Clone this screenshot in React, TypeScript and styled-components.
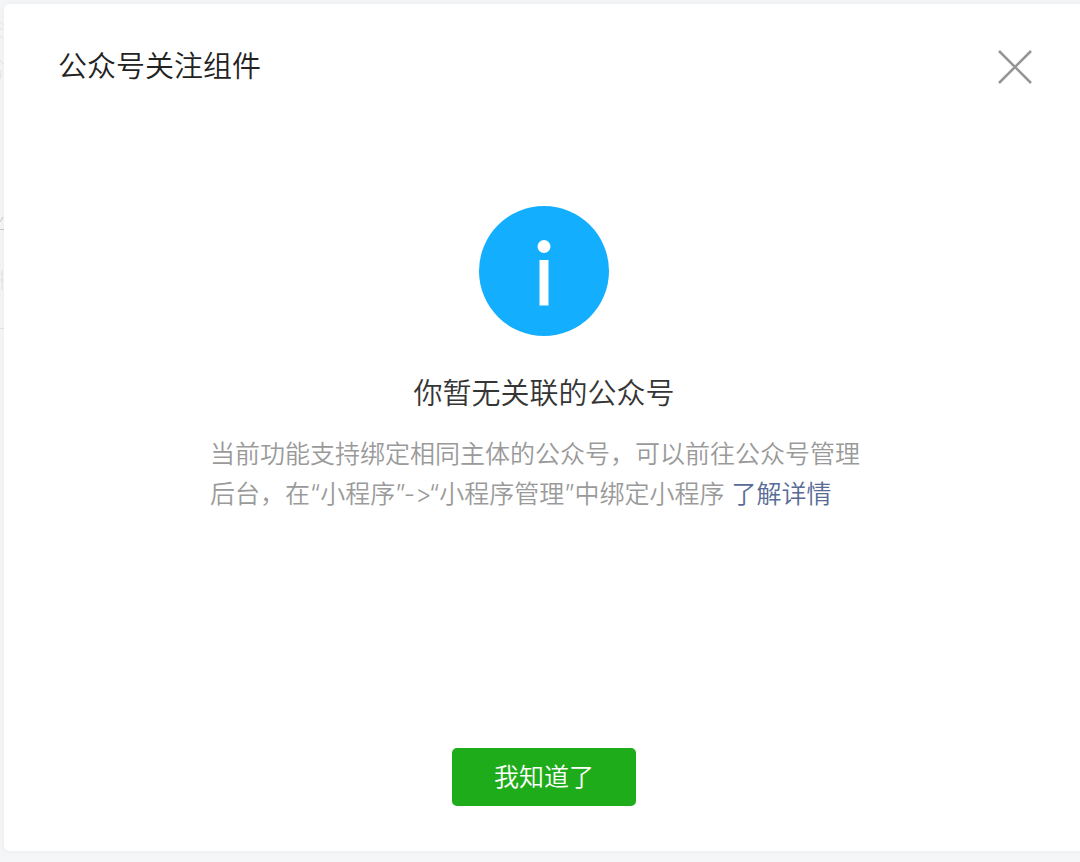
import React from "react";
import styled, { createGlobalStyle } from "styled-components";

const GlobalStyle = createGlobalStyle`
  * { box-sizing: border-box; }
  body {
    margin: 0;
    background: #f5f6f8;
    font-family: Inter, "Noto Sans CJK SC", sans-serif;
    font-weight: 350;
    font-variant-ligatures: no-contextual;
  }
`;

const Page = styled.div`
  display: flex;
  min-height: 100vh;
  overflow: hidden;
`;

const Backdrop = styled.svg`
  flex: none;
  width: 4px;
  height: 400px;
`;

const Dialog = styled.section`
  flex: 1 0 100%;
  display: flex;
  flex-direction: column;
  margin: 4px 0 11px;
  background: #fff;
  border-radius: 6px;
  box-shadow: 0 0 8px rgba(0, 0, 0, 0.05);
`;

const Header = styled.header`
  display: flex;
  align-items: center;
  justify-content: space-between;
  padding: 41px 50px 0 54px;
`;

const Title = styled.h1`
  margin: 0;
  font-size: 29px;
  line-height: 44px;
  font-weight: inherit;
  color: #222;
`;

const CloseButton = styled.button`
  display: flex;
  padding: 0;
  border: 0;
  background: none;
  cursor: pointer;
`;

const Content = styled.div`
  flex: 1;
  display: flex;
  flex-direction: column;
  align-items: center;
  padding: 117px 24px 40px;
`;

const Heading = styled.h2`
  margin: 36px 0 18px;
  font-size: 29px;
  line-height: 44px;
  font-weight: inherit;
  color: #353535;
`;

const Description = styled.p`
  width: 668px;
  max-width: 100%;
  margin: 0;
  font-size: 25px;
  line-height: 40px;
  color: #9a9a9a;
`;

const DetailLink = styled.a`
  color: #576b95;
  text-decoration: none;
`;

const Footer = styled.footer`
  display: flex;
  justify-content: center;
  padding-bottom: 45px;
`;

const PrimaryButton = styled.button`
  width: 184px;
  height: 58px;
  padding: 0;
  border: 0;
  border-radius: 5px;
  background: #1fac1b;
  color: #fff;
  font: inherit;
  font-size: 25px;
  line-height: 40px;
  cursor: pointer;
`;

export default function App() {
  return (
    <Page>
      <GlobalStyle />
      <Backdrop viewBox="0 0 4 400" aria-hidden="true">
        <g stroke="#e3e4e5" fill="none">
          <path d="M0 22l3 3M0 29h3M0 36l3 3M0 60l3 4M1 70v5l-1 4" />
          <path d="M0 274h3M0 280h3M2 270v20" />
          <path d="M0 328.5h4" />
        </g>
        <path d="M0 222l3-5M0 229.5h4" stroke="#c9cacb" fill="none" />
      </Backdrop>
      <Dialog role="dialog" aria-labelledby="dialog-title">
        <Header>
          <Title id="dialog-title">公众号关注组件</Title>
          <CloseButton type="button" aria-label="关闭">
            <svg width="38" height="38" viewBox="0 0 38 38" fill="none" stroke="#959595" strokeWidth="2.6">
              <path d="M3 3l32 32M35 3L3 35" />
            </svg>
          </CloseButton>
        </Header>
        <Content>
          <svg width="130" height="130" viewBox="0 0 130 130" aria-hidden="true">
            <circle cx="65" cy="65" r="65" fill="#14aeff" />
            <circle cx="65" cy="40.5" r="6.5" fill="#fff" />
            <path d="M60.5 54h9v45.500h-9z" fill="#fff" />
          </svg>
          <Heading>你暂无关联的公众号</Heading>
          <Description>
            当前功能支持绑定相同主体的公众号，可以前往公众号管理后台，在“小程序”-&gt;“小程序管理”中绑定小程序{" "}
            <DetailLink href="#details">了解详情</DetailLink>
          </Description>
        </Content>
        <Footer>
          <PrimaryButton type="button">我知道了</PrimaryButton>
        </Footer>
      </Dialog>
    </Page>
  );
}
